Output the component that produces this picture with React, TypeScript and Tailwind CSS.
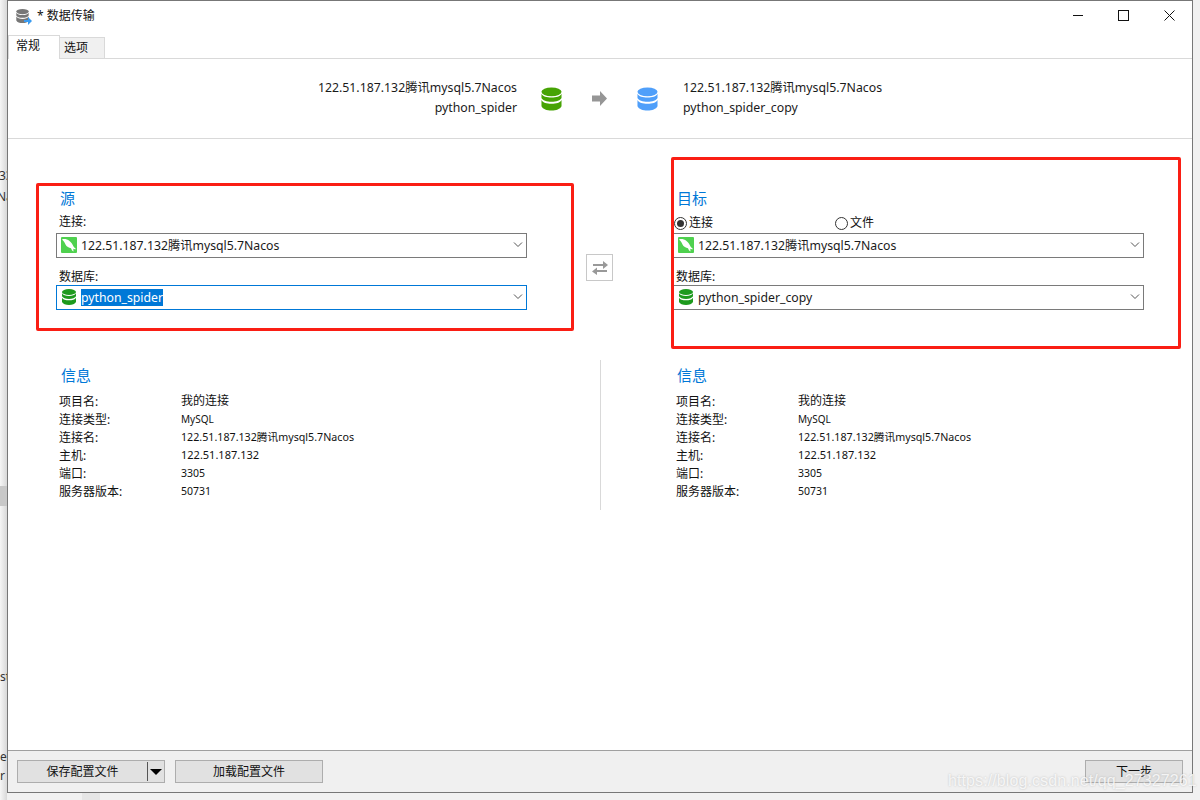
const FONT = "font-['Noto_Sans','Noto_Sans_CJK_SC',sans-serif]";
const CONN = '122.51.187.132腾讯mysql5.7Nacos';

// Database cylinder, the colour comes from the parent text colour
function DbIcon({ className }: { className: string }) {
  return (
    <svg viewBox="0 0 22 24" className={className} fill="currentColor">
      <ellipse cx="11" cy="4.500" rx="10.500" ry="4.500" />
      <path d="M.5 6.500C2 9.500 6 10.500 11 10.500s9-1 10.500-4V11c-1 2.500-5.500 4-10.500 4S1.500 13.500.5 11z" />
      <path d="M.5 13C2 16 6 17 11 17s9-1 10.500-4v6.500C20 22.500 16 24 11 24S2 22.500.5 19.500z" />
    </svg>
  );
}

function MysqlIcon() {
  return (
    <svg viewBox="0 0 16 16" className="h-4 w-4 shrink-0">
      <rect width="16" height="16" rx="1" fill="#4fd14f" />
      <path d="M1 2.500C3 1.500 6 2 8.500 4c2 1.500 3 3.500 4 5.500.5 1 1.500 1.800 2.500 2.500-1 .4-2 .2-2.700-.2l.2 2.700c-1.200-.6-2-1.800-2.500-3.200C8 11 5.500 9.500 4.500 7.500 3.800 6 3 4 1 2.500z" fill="#fff" />
    </svg>
  );
}

function Combo({ icon, text, focused, selected }: { icon: 'mysql' | 'db'; text: string; focused?: boolean; selected?: boolean }) {
  return (
    <div className={`flex h-[25px] w-[471px] items-center border bg-white pb-[1px] pl-[4px] ${focused ? 'border-[#0078d7]' : 'border-[#7a7a7a]'}`}>
      {icon === 'mysql' ? <MysqlIcon /> : <DbIcon className="h-[16px] w-[16px] shrink-0 text-[#1d9a1d]" />}
      <span className={`ml-[4px] text-[12.250px] leading-[17px] ${selected ? 'bg-[#0078d7] text-white' : 'text-[#1a1a1a]'}`}>{text}</span>
      <svg viewBox="0 0 10 6" className="ml-auto mr-[3px] h-[6px] w-[10px] text-[#555]" fill="none" stroke="currentColor">
        <path d="M1 .5l4 4 4-4" />
      </svg>
    </div>
  );
}

function Radio({ checked, label, className }: { checked?: boolean; label: string; className: string }) {
  return (
    <div className={`flex items-center ${className}`}>
      <span className="flex h-[13px] w-[13px] items-center justify-center rounded-full border border-[#333] bg-white">
        {checked && <span className="h-[7px] w-[7px] rounded-full bg-[#333]" />}
      </span>
      <span className="ml-[2px] text-[12px] text-[#111]">{label}</span>
    </div>
  );
}

function InfoBlock({ titleClass }: { titleClass: string }) {
  const rows = [
    ['项目名:', '我的连接', 'text-[12px]'],
    ['连接类型:', 'MySQL', 'text-[10px]'],
    ['连接名:', CONN, 'text-[10.700px]'],
    ['主机:', '122.51.187.132', 'text-[11px]'],
    ['端口:', '3305', 'text-[10.500px]'],
    ['服务器版本:', '50731', 'text-[10.500px]'],
  ];
  return (
    <div className="mt-[55px]">
      <div className={`h-[20px] text-[15px] leading-[20px] text-[#0078d7] ${titleClass}`}>信息</div>
      <div className="mt-[7px]">
        {rows.map(([k, v, size]) => (
          <div key={k} className="flex h-[18px] items-center text-[#111]">
            <span className="ml-[3px] w-[122px] pt-[1px] text-[12px] leading-[18px]">{k}</span>
            <span className={`${size} leading-[18px]`}>{v}</span>
          </div>
        ))}
      </div>
    </div>
  );
}

export default function App() {
  return (
    <div className={`relative h-[800px] w-[1200px] overflow-hidden bg-[#f1f1f1] ${FONT}`}>
      {/* bits of the window behind */}
      <div className="absolute left-0 top-0 h-full w-[7px] bg-gradient-to-r from-[#f6f6f6] to-[#d8d8d8]" />
      <div className="absolute left-0 top-[486px] h-[20px] w-[7px] bg-[#c8c8c8]" />
      <span className="absolute left-[-1px] top-[167px] text-[12px] text-[#333]">33</span>
      <span className="absolute left-[-3px] top-[188px] text-[12px] text-[#333]">Na</span>
      <span className="absolute left-[0px] top-[668px] text-[12px] text-[#333]">st</span>
      <span className="absolute left-[0px] top-[748px] text-[12px] text-[#333]">e</span>
      <span className="absolute left-[0px] top-[767px] text-[12px] text-[#333]">r</span>
      <div className="absolute left-[82px] top-[793px] h-[7px] w-[18px] bg-[#e6e6e6]" />

      {/* window */}
      <div className="relative ml-[7px] flex h-[793px] w-[1186px] flex-col border border-[#777] bg-white">
        <div className="flex h-[33px] shrink-0 items-center pb-[3px]">
          <div className="relative ml-[8px] h-[17px] w-[16px]">
            <DbIcon className="h-[16px] w-[13px] text-[#777]" />
            <svg viewBox="0 0 8 8" className="absolute bottom-[0px] right-[0px] h-[8px] w-[8px] text-[#3a9bf0]" fill="currentColor">
              <path d="M0 3h4V0l4 4-4 4V5H0z" />
            </svg>
          </div>
          <span className="ml-[5px] text-[12px] text-[#111]">* 数据传输</span>
          <div className="ml-auto mb-[2px] mr-[17px] flex items-center">
            <svg viewBox="0 0 10 1" className="h-[1px] w-[10px]"><rect width="10" height="1" fill="#111" /></svg>
            <svg viewBox="0 0 11 11" className="ml-[35px] h-[11px] w-[11px]" fill="none" stroke="#111"><rect x=".5" y=".5" width="10" height="10" /></svg>
            <svg viewBox="0 0 11 11" className="ml-[35px] h-[11px] w-[11px]" fill="none" stroke="#111"><path d="M.5.5l10 10M10.500.5l-10 10" /></svg>
          </div>
        </div>

        <div className="flex h-[25px] shrink-0 items-end border-b border-[#d9d9d9]">
          <div className="relative top-[1px] flex h-[24px] w-[52px] items-center border border-b-0 border-[#d9d9d9] bg-white pb-[3px] pl-[7px] text-[12px] text-[#111]">常规</div>
          <div className="flex h-[21px] w-[45px] items-center border border-b-0 border-l-0 border-[#d9d9d9] bg-[#f0f0f0] pl-[4px] text-[12px] text-[#111]">选项</div>
        </div>

        <div className="flex h-[80px] shrink-0 items-center border-b border-[#d9d9d9]">
          <div className="mb-[2px] w-[509px] text-right text-[12.300px] leading-[20px] text-[#1a1a1a]">
            <div>{CONN}</div>
            <div>python_spider</div>
          </div>
          <DbIcon className="ml-[24px] h-[24px] w-[21px] text-[#46a304]" />
          <svg viewBox="0 0 15 15" className="ml-[30px] h-[15px] w-[15px] text-[#969696]" fill="currentColor">
            <path d="M0 4.500h8V0l7 7.500-7 7.500v-4.500H0z" />
          </svg>
          <DbIcon className="ml-[30px] h-[24px] w-[21px] text-[#4f9ffa]" />
          <div className="mb-[2px] ml-[25px] text-[12.300px] leading-[20px] text-[#1a1a1a]">
            <div>{CONN}</div>
            <div>python_spider_copy</div>
          </div>
        </div>

        <div className="flex min-h-0 flex-1">
          <div className="relative w-[617px] shrink-0 pl-[48px] pt-[49px]">
            <div className="ml-[4px] h-[20px] text-[15px] leading-[20px] text-[#0078d7]">源</div>
            <div className="ml-[3px] mt-[5px] h-[18px] text-[12px] leading-[18px] text-[#111]">连接:</div>
            <div className="mt-[2px]"><Combo icon="mysql" text={CONN} /></div>
            <div className="ml-[3px] mt-[10px] h-[17px] text-[12px] leading-[18px] text-[#111]">数据库:</div>
            <Combo icon="db" text="python_spider" focused selected />
            <InfoBlock titleClass="ml-[5px]" />
            {/* swap button and the divider sit across the two panels */}
            <div className="absolute left-[578px] top-[115px] flex h-[27px] w-[27px] items-center justify-center border border-[#c8c8c8] bg-white">
              <svg viewBox="0 0 16 14" className="h-[14px] w-[16px] text-[#999]" fill="currentColor">
                <path d="M1 3h10V0l5 4-5 4V5H1zM15 9H5V6.500L0 10.500 5 14v-3h10z" />
              </svg>
            </div>
            <div className="absolute left-[592px] top-[221px] h-[150px] w-[1px] bg-[#d9d9d9]" />
          </div>
          <div className="flex-1 pl-[48px] pt-[49px]">
            <div className="ml-[4px] h-[20px] text-[15px] leading-[20px] text-[#0078d7]">目标</div>
            <div className="mt-[6px] flex h-[18px] items-center">
              <Radio checked label="连接" className="ml-[1px] w-[161px]" />
              <Radio label="文件" className="" />
            </div>
            <div className="mt-[1px]"><Combo icon="mysql" text={CONN} /></div>
            <div className="ml-[3px] mt-[10px] h-[17px] text-[12px] leading-[18px] text-[#111]">数据库:</div>
            <Combo icon="db" text="python_spider_copy" />
            <InfoBlock titleClass="ml-[4px]" />
          </div>
        </div>

        <div className="flex h-[42px] shrink-0 items-center border-t border-[#a0a0a0] bg-[#f0f0f0] pl-[9px] pr-[9px]">
          <div className="flex h-[23px] w-[148px] items-center border border-[#adadad] bg-[#e1e1e1] text-[12px] text-[#111]">
            <span className="flex-1 text-center">保存配置文件</span>
            <span className="h-[19px] w-[1px] bg-[#555]" />
            <span className="mx-[2px] h-0 w-0 border-x-[6px] border-t-[6px] border-x-transparent border-t-black" />
          </div>
          <div className="ml-[10px] flex h-[23px] w-[148px] items-center justify-center border border-[#adadad] bg-[#e1e1e1] text-[12px] text-[#111]">加载配置文件</div>
          <div className="ml-auto flex h-[23px] w-[98px] items-center justify-center border border-[#adadad] bg-[#e1e1e1] text-[12px] text-[#111]">下一步</div>
        </div>
      </div>

      {/* annotation boxes drawn over the screenshot */}
      <div className="pointer-events-none absolute left-[36px] top-[183px] h-[148px] w-[538px] rounded-[2px] border-[3px] border-[#fa1e14]" />
      <div className="pointer-events-none absolute left-[671px] top-[157px] h-[192px] w-[510px] rounded-[2px] border-[3px] border-[#fa1e14]" />
      <span className="absolute left-[948px] top-[770px] font-['Liberation_Sans',sans-serif] text-[16px] leading-[22px] tracking-[0.1px] text-white/80 [text-shadow:0_0_2px_rgba(120,120,120,0.45)]">https://blog.csdn.net/qq_27327261</span>
    </div>
  );
}
